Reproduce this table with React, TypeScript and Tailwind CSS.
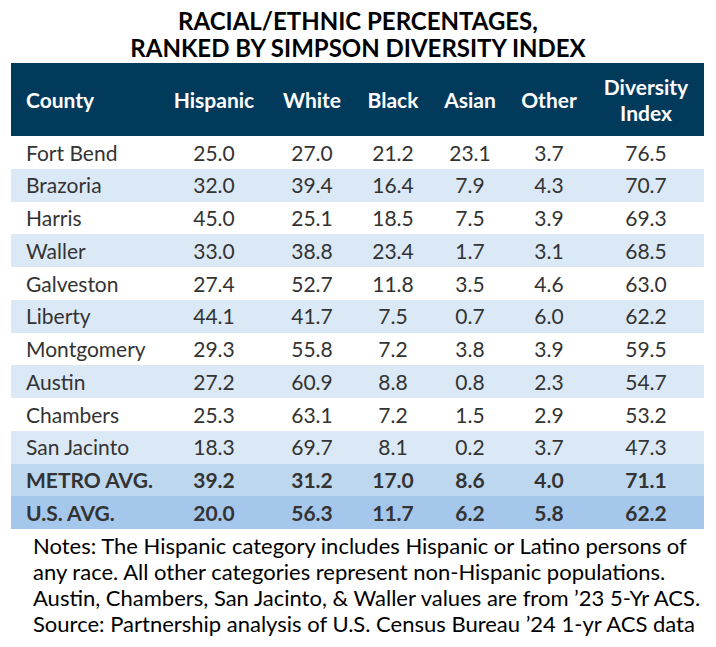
const rows: [string, string, string, string, string, string, string][] = [
  ['Fort Bend', '25.0', '27.0', '21.2', '23.1', '3.7', '76.5'],
  ['Brazoria', '32.0', '39.4', '16.4', '7.9', '4.3', '70.7'],
  ['Harris', '45.0', '25.1', '18.5', '7.5', '3.9', '69.3'],
  ['Waller', '33.0', '38.8', '23.4', '1.7', '3.1', '68.5'],
  ['Galveston', '27.4', '52.7', '11.8', '3.5', '4.6', '63.0'],
  ['Liberty', '44.1', '41.7', '7.5', '0.7', '6.0', '62.2'],
  ['Montgomery', '29.3', '55.8', '7.2', '3.8', '3.9', '59.5'],
  ['Austin', '27.2', '60.9', '8.8', '0.8', '2.3', '54.7'],
  ['Chambers', '25.3', '63.1', '7.2', '1.5', '2.9', '53.2'],
  ['San Jacinto', '18.3', '69.7', '8.1', '0.2', '3.7', '47.3'],
]

const totals: { cells: string[]; bg: string }[] = [
  { cells: ['METRO AVG.', '39.2', '31.2', '17.0', '8.6', '4.0', '71.1'], bg: 'bg-[#bdd7ee]' },
  { cells: ['U.S. AVG.', '20.0', '56.3', '11.7', '6.2', '5.8', '62.2'], bg: 'bg-[#a4c7eb]' },
]

const grid = 'grid grid-cols-[149px_108px_88px_74px_80px_78px_116px] items-center'

function Row({ cells, className }: { cells: string[]; className: string }) {
  return (
    <div className={`${grid} h-[32.75px] ${className}`}>
      {cells.map((c, i) => (
        <div key={i} className={i === 0 ? 'pl-[15px] whitespace-nowrap' : 'text-center'}>
          {c}
        </div>
      ))}
    </div>
  )
}

export default function App() {
  return (
    <div
      className="h-[647px] w-[716px] overflow-hidden bg-white text-[#333333]"
      style={{ fontFamily: 'Lato, "Open Sans", sans-serif' }}
    >
      <div className="pt-[7px] text-center text-[24px] font-bold leading-[27px] text-black">
        <div>RACIAL/ETHNIC PERCENTAGES,</div>
        <div>RANKED BY SIMPSON DIVERSITY INDEX</div>
      </div>

      <div className="mx-[11px] mt-[2px] w-[693px]">
        <div className={`${grid} h-[73px] bg-[#023a5c] text-[21px] font-bold leading-[26px] text-white`}>
          <div className="pl-[15px]">County</div>
          <div className="text-center">Hispanic</div>
          <div className="text-center">White</div>
          <div className="text-center">Black</div>
          <div className="text-center">Asian</div>
          <div className="text-center">Other</div>
          <div className="text-center">
            Diversity
            <br />
            Index
          </div>
        </div>

        <div className="text-[21px]">
          {rows.map((r, i) => (
            <Row key={r[0]} cells={r} className={i % 2 === 1 ? 'bg-[#dbe8f6]' : 'bg-white'} />
          ))}
          {totals.map((t) => (
            <Row key={t.cells[0]} cells={t.cells} className={`${t.bg} font-bold`} />
          ))}
        </div>
      </div>

      <div className="px-[33px] pt-[4px] text-[22px] leading-[26px] whitespace-nowrap text-black">
        <div>Notes: The Hispanic category includes Hispanic or Latino persons of</div>
        <div>any race. All other categories represent non-Hispanic populations.</div>
        <div>Austin, Chambers, San Jacinto, &amp; Waller values are from ’23 5-Yr ACS.</div>
        <div>Source: Partnership analysis of U.S. Census Bureau ’24 1-yr ACS data</div>
      </div>
    </div>
  )
}
